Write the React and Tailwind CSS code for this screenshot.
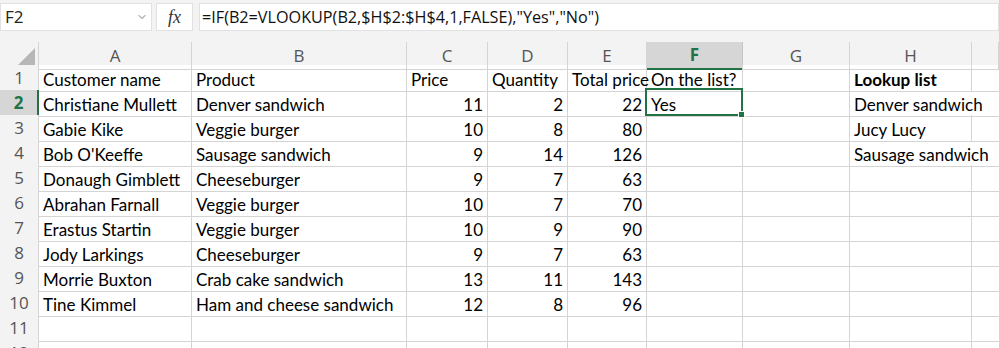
import { ChevronDown } from "lucide-react";

const cols = ["A", "B", "C", "D", "E", "F", "G", "H", ""];
const widths = "grid-cols-[39px_153px_215px_81px_80px_79px_96px_107px_122px_1fr]";

const rows = [
  ["Customer name", "Product", "Price", "Quantity", "Total price", "On the list?", "", "Lookup list", ""],
  ["Christiane Mullett", "Denver sandwich", 11, 2, 22, "Yes", "", "Denver sandwich", ""],
  ["Gabie Kike", "Veggie burger", 10, 8, 80, "", "", "Jucy Lucy", ""],
  ["Bob O'Keeffe", "Sausage sandwich", 9, 14, 126, "", "", "Sausage sandwich", ""],
  ["Donaugh Gimblett", "Cheeseburger", 9, 7, 63, "", "", "", ""],
  ["Abrahan Farnall", "Veggie burger", 10, 7, 70, "", "", "", ""],
  ["Erastus Startin", "Veggie burger", 10, 9, 90, "", "", "", ""],
  ["Jody Larkings", "Cheeseburger", 9, 7, 63, "", "", "", ""],
  ["Morrie Buxton", "Crab cake sandwich", 13, 11, 143, "", "", "", ""],
  ["Tine Kimmel", "Ham and cheese sandwich", 12, 8, 96, "", "", "", ""],
  ["", "", "", "", "", "", "", "", ""],
  ["", "", "", "", "", "", "", "", ""],
];

const ui = { fontFamily: '"Open Sans", "Noto Sans", sans-serif' };
const cellFont = { fontFamily: 'Lato, "Liberation Sans", sans-serif' };

export default function App() {
  return (
    <div className="w-[999px] h-[348px] overflow-hidden bg-[#f3f3f3]" style={ui}>
      {/* formula bar */}
      <div className="flex items-center h-[42px] pb-[11px] pt-[3px] gap-[4px]">
        <div className="w-[152px] h-[28px] bg-white border border-[#e1e1e1] flex items-center justify-between pl-[4px] pr-[3px]">
          <span className="text-[17px] text-[#222]">F2</span>
          <ChevronDown size={12} strokeWidth={1.6} className="text-[#555]" />
        </div>
        <div className="w-[37px] h-[28px] bg-white border border-[#e1e1e1] flex items-center justify-center">
          <span className="italic text-[18px] text-[#333]" style={{ fontFamily: '"Liberation Serif", serif' }}>fx</span>
        </div>
        <div className="flex-1 h-[28px] bg-white border border-[#e1e1e1] ml-[2px] flex items-center pl-[2px]">
          <span className="text-[16.2px] text-[#111] whitespace-nowrap">=IF(B2=VLOOKUP(B2,$H$2:$H$4,1,FALSE),"Yes","No")</span>
        </div>
      </div>

      {/* column headers */}
      <div className={`grid ${widths} h-[23px]`}>
        <div className="border-r border-b border-[#d4d4d4] flex items-end justify-end pr-[3px] pb-[3px]">
          <svg width="18" height="18" viewBox="0 0 18 18">
            <polygon points="18,0 18,18 0,18" fill="#b7b7b7" />
          </svg>
        </div>
        {cols.map((c, k) =>
          c === "F" ? (
            <div key={k} className="bg-[#d6d6d6] border-b-2 border-[#217346] border-r border-r-[#c6c6c6] flex items-center justify-center text-[17px] font-bold text-[#217346]">
              {c}
            </div>
          ) : (
            <div key={k} className="border-r border-b border-[#d4d4d4] flex items-center justify-center text-[17px] text-[#555]">
              {c}
            </div>
          )
        )}
      </div>

      {/* rows */}
      {rows.map((r, i) => {
        const n = i + 1;
        const sel = n === 2;
        return (
          <div key={n} className={`grid ${widths} h-[25px] bg-white`}>
            <div
              className={`border-b border-[#d4d4d4] flex items-center justify-center text-[17px] ${
                sel ? "bg-[#d6d6d6] border-r-2 border-r-[#217346] font-bold text-[#217346]" : "bg-[#f3f3f3] border-r text-[#555]"
              }`}
            >
              {n}
            </div>
            {r.map((v, j) => {
              const num = typeof v === "number";
              const isSel = sel && j === 5;
              const spill = j === 7 && (n === 2 || n === 4);
              return (
                <div
                  key={j}
                  className={`border-b border-[#d4d4d4] flex items-end leading-[22px] text-[17px] text-black whitespace-nowrap ${
                    num ? "justify-end pr-[4px]" : "pl-[4px]"
                  } ${n === 1 && j === 7 ? "font-bold" : ""} ${
                    j === 8 ? "" : spill ? "border-r border-r-transparent" : "border-r"
                  } ${isSel ? "relative z-10" : ""}`}
                  style={cellFont}
                >
                  {v}
                  {isSel && (
                    <div className="absolute -left-[2px] -top-[2px] w-[98px] h-[28px] border-2 border-[#217346]">
                      <div className="absolute -right-[4px] -bottom-[4px] w-[7px] h-[7px] bg-[#217346] border border-white" />
                    </div>
                  )}
                </div>
              );
            })}
          </div>
        );
      })}
    </div>
  );
}
